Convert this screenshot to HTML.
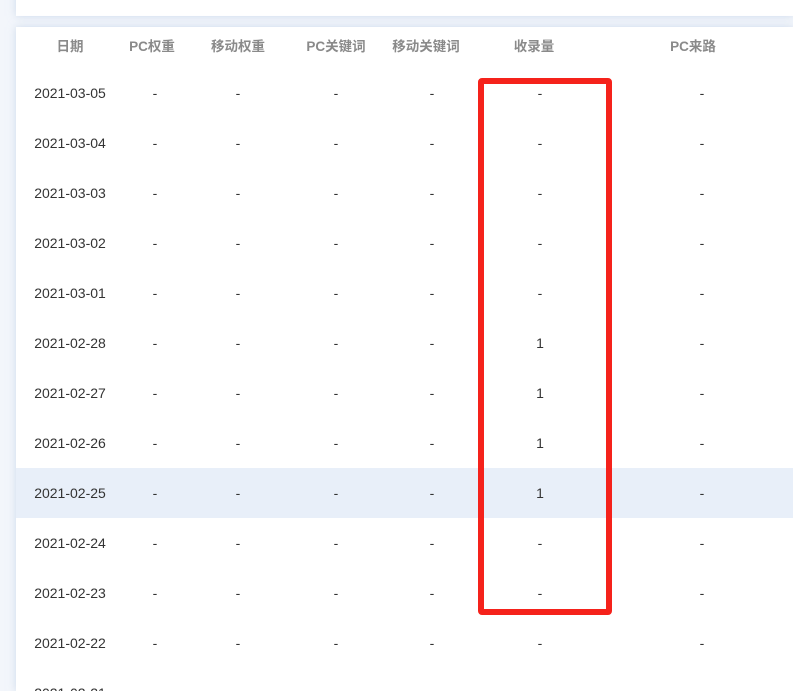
<!DOCTYPE html>
<html><head><meta charset="utf-8"><style>
html,body{margin:0;padding:0;width:793px;height:691px;overflow:hidden;background:#f3f6fb;font-family:"Liberation Sans","Noto Sans CJK SC",sans-serif;position:relative;}
.card1{position:absolute;left:16px;top:-10px;width:777px;height:26px;background:#fff;box-shadow:0 0 8px rgba(180,200,225,.6);}
.card2{position:absolute;left:16px;top:27px;width:777px;height:664px;background:#fff;box-shadow:0 0 8px rgba(180,200,225,.6);}
.row{position:absolute;left:16px;width:777px;height:50px;}
.row.hl{background:#e8eff9;}
.c{position:absolute;top:-1px;height:50px;line-height:50px;font-size:14px;color:#333;transform:translateX(-50%);white-space:nowrap;}
.h .c{font-weight:bold;color:#8a8a8a;font-size:13.5px;top:0;}
.box{position:absolute;left:478px;top:78px;width:122px;height:525px;border:6px solid #f5221b;border-radius:4px;}
</style></head><body>
<div class="card1"></div>
<div class="card2"></div>
<div class="row h" style="top:22px"><span class="c" style="left:54px">日期</span><span class="c" style="left:136px">PC权重</span><span class="c" style="left:222px">移动权重</span><span class="c" style="left:320px">PC关键词</span><span class="c" style="left:410px">移动关键词</span><span class="c" style="left:518px">收录量</span><span class="c" style="left:677px">PC来路</span></div>
<div class="row" style="top:69px"><span class="c" style="left:54px">2021-03-05</span><span class="c" style="left:139px">-</span><span class="c" style="left:222px">-</span><span class="c" style="left:320px">-</span><span class="c" style="left:416px">-</span><span class="c" style="left:524px">-</span><span class="c" style="left:686px">-</span></div>
<div class="row" style="top:119px"><span class="c" style="left:54px">2021-03-04</span><span class="c" style="left:139px">-</span><span class="c" style="left:222px">-</span><span class="c" style="left:320px">-</span><span class="c" style="left:416px">-</span><span class="c" style="left:524px">-</span><span class="c" style="left:686px">-</span></div>
<div class="row" style="top:169px"><span class="c" style="left:54px">2021-03-03</span><span class="c" style="left:139px">-</span><span class="c" style="left:222px">-</span><span class="c" style="left:320px">-</span><span class="c" style="left:416px">-</span><span class="c" style="left:524px">-</span><span class="c" style="left:686px">-</span></div>
<div class="row" style="top:219px"><span class="c" style="left:54px">2021-03-02</span><span class="c" style="left:139px">-</span><span class="c" style="left:222px">-</span><span class="c" style="left:320px">-</span><span class="c" style="left:416px">-</span><span class="c" style="left:524px">-</span><span class="c" style="left:686px">-</span></div>
<div class="row" style="top:269px"><span class="c" style="left:54px">2021-03-01</span><span class="c" style="left:139px">-</span><span class="c" style="left:222px">-</span><span class="c" style="left:320px">-</span><span class="c" style="left:416px">-</span><span class="c" style="left:524px">-</span><span class="c" style="left:686px">-</span></div>
<div class="row" style="top:319px"><span class="c" style="left:54px">2021-02-28</span><span class="c" style="left:139px">-</span><span class="c" style="left:222px">-</span><span class="c" style="left:320px">-</span><span class="c" style="left:416px">-</span><span class="c" style="left:524px">1</span><span class="c" style="left:686px">-</span></div>
<div class="row" style="top:369px"><span class="c" style="left:54px">2021-02-27</span><span class="c" style="left:139px">-</span><span class="c" style="left:222px">-</span><span class="c" style="left:320px">-</span><span class="c" style="left:416px">-</span><span class="c" style="left:524px">1</span><span class="c" style="left:686px">-</span></div>
<div class="row" style="top:419px"><span class="c" style="left:54px">2021-02-26</span><span class="c" style="left:139px">-</span><span class="c" style="left:222px">-</span><span class="c" style="left:320px">-</span><span class="c" style="left:416px">-</span><span class="c" style="left:524px">1</span><span class="c" style="left:686px">-</span></div>
<div class="row hl" style="top:468px"><span class="c" style="left:54px;top:0">2021-02-25</span><span class="c" style="left:139px;top:0">-</span><span class="c" style="left:222px;top:0">-</span><span class="c" style="left:320px;top:0">-</span><span class="c" style="left:416px;top:0">-</span><span class="c" style="left:524px;top:0">1</span><span class="c" style="left:686px;top:0">-</span></div>
<div class="row" style="top:519px"><span class="c" style="left:54px">2021-02-24</span><span class="c" style="left:139px">-</span><span class="c" style="left:222px">-</span><span class="c" style="left:320px">-</span><span class="c" style="left:416px">-</span><span class="c" style="left:524px">-</span><span class="c" style="left:686px">-</span></div>
<div class="row" style="top:569px"><span class="c" style="left:54px">2021-02-23</span><span class="c" style="left:139px">-</span><span class="c" style="left:222px">-</span><span class="c" style="left:320px">-</span><span class="c" style="left:416px">-</span><span class="c" style="left:524px">-</span><span class="c" style="left:686px">-</span></div>
<div class="row" style="top:619px"><span class="c" style="left:54px">2021-02-22</span><span class="c" style="left:139px">-</span><span class="c" style="left:222px">-</span><span class="c" style="left:320px">-</span><span class="c" style="left:416px">-</span><span class="c" style="left:524px">-</span><span class="c" style="left:686px">-</span></div>
<div class="row" style="top:669px;height:22px;overflow:hidden"><span class="c" style="left:54px">2021-02-21</span></div>
<div class="box"></div>
</body></html>
